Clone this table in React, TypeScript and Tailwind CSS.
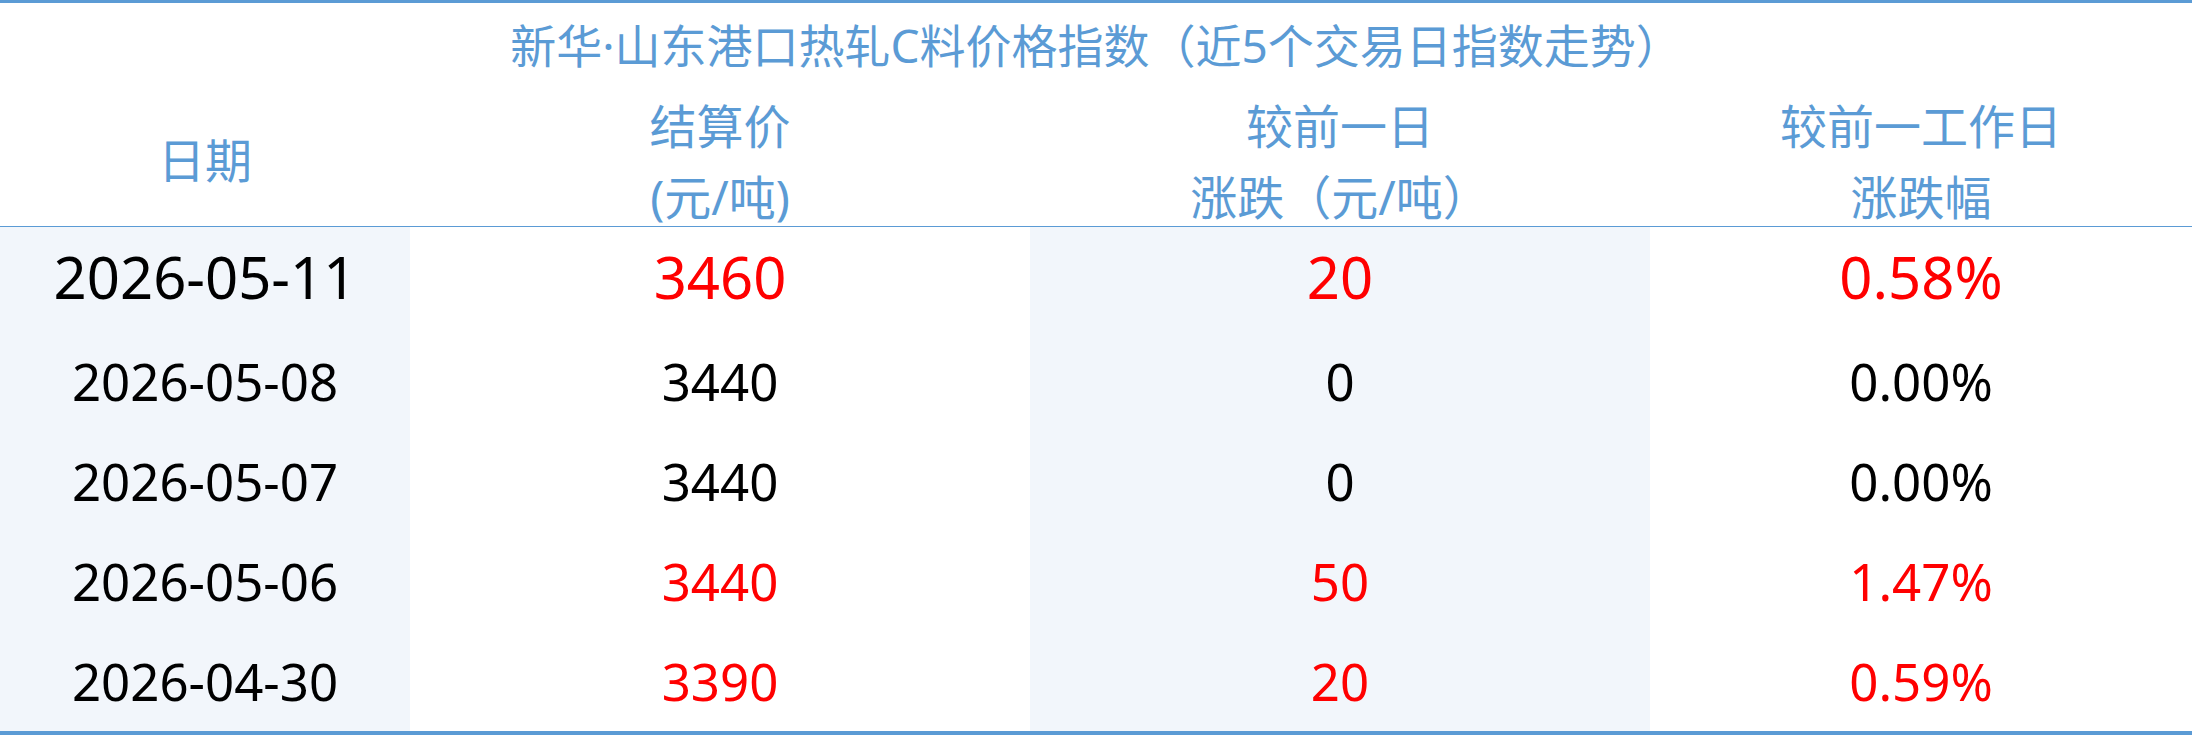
const rows = [
  { date: "2026-05-11", price: "3460", diff: "20", pct: "0.58%", up: true, big: true },
  { date: "2026-05-08", price: "3440", diff: "0", pct: "0.00%", up: false },
  { date: "2026-05-07", price: "3440", diff: "0", pct: "0.00%", up: false },
  { date: "2026-05-06", price: "3440", diff: "50", pct: "1.47%", up: true },
  { date: "2026-04-30", price: "3390", diff: "20", pct: "0.59%", up: true },
];

const font = "font-['Noto_Sans','Noto_Sans_CJK_SC',sans-serif]";

const App = () => {
  return (
    <div className={`w-[2192px] h-[735px] bg-white border-t-[3px] border-b-[4px] border-[#5b9bd5] ${font}`}>
      <div className="h-[88px] flex items-center justify-center pb-[4px] text-[46px] text-[#5b9bd5]">
        新华·山东港口热轧C料价格指数（近5个交易日指数走势）
      </div>

      <div className="h-[136px] grid grid-cols-[410px_620px_620px_1fr] border-b border-[#5b9bd5] text-[47px] leading-[71px] text-[#5b9bd5]">
        <div className="flex items-center justify-center pb-[10px]">日期</div>
        <div className="flex flex-col items-center justify-center pb-[6px]">
          <span>结算价</span>
          <span>(元/吨)</span>
        </div>
        <div className="flex flex-col items-center justify-center pb-[6px]">
          <span>较前一日</span>
          <span>涨跌（元/吨）</span>
        </div>
        <div className="flex flex-col items-center justify-center pb-[6px]">
          <span>较前一工作日</span>
          <span>涨跌幅</span>
        </div>
      </div>

      {rows.map((r) => {
        const color = r.up ? "text-[#ff0000]" : "text-black";
        const cell = r.big ? "flex items-center justify-center pb-[5px]" : "flex items-center justify-center";
        return (
          <div
            key={r.date}
            className={`grid grid-cols-[410px_620px_620px_1fr] ${r.big ? "h-[104px] text-[58px]" : "h-[100px] text-[51px]"}`}
          >
            <div className={`${cell} bg-[#f2f6fb] text-black`}>{r.date}</div>
            <div className={`${cell} ${color}`}>{r.price}</div>
            <div className={`${cell} bg-[#f2f6fb] ${color}`}>{r.diff}</div>
            <div className={`${cell} ${color}`}>{r.pct}</div>
          </div>
        );
      })}
    </div>
  );
};

export default App;
